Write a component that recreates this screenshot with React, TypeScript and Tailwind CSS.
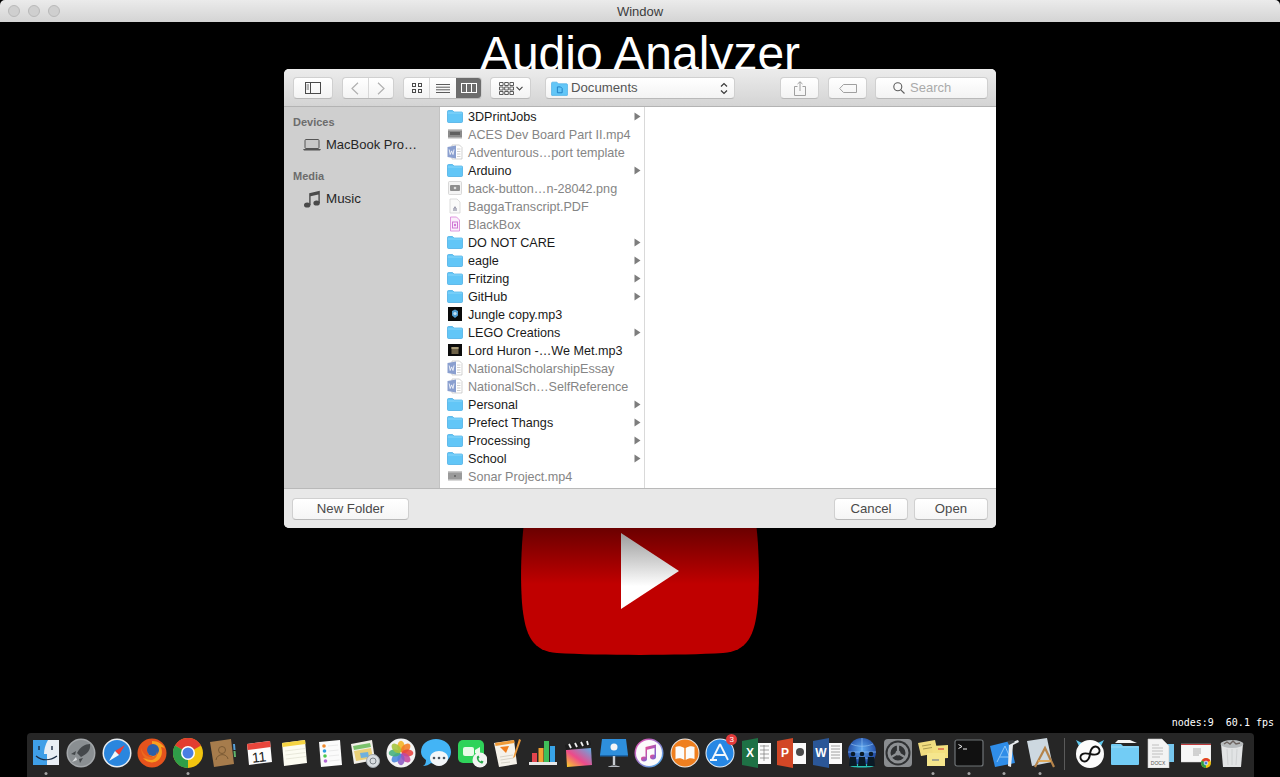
import type { ReactNode } from 'react';

type FileKind = 'folder' | 'video' | 'word' | 'png' | 'pdf' | 'pink' | 'jungle' | 'huron' | 'blank' | 'sonar';

interface FileEntry {
  name: string;
  kind: FileKind;
}

const files: FileEntry[] = [
  { name: '3DPrintJobs', kind: 'folder' },
  { name: 'ACES Dev Board Part II.mp4', kind: 'video' },
  { name: 'Adventurous…port template', kind: 'word' },
  { name: 'Arduino', kind: 'folder' },
  { name: 'back-button…n-28042.png', kind: 'png' },
  { name: 'BaggaTranscript.PDF', kind: 'pdf' },
  { name: 'BlackBox', kind: 'pink' },
  { name: 'DO NOT CARE', kind: 'folder' },
  { name: 'eagle', kind: 'folder' },
  { name: 'Fritzing', kind: 'folder' },
  { name: 'GitHub', kind: 'folder' },
  { name: 'Jungle copy.mp3', kind: 'jungle' },
  { name: 'LEGO Creations', kind: 'folder' },
  { name: 'Lord Huron -…We Met.mp3', kind: 'huron' },
  { name: 'NationalScholarshipEssay', kind: 'word' },
  { name: 'NationalSch…SelfReference', kind: 'word' },
  { name: 'Personal', kind: 'folder' },
  { name: 'Prefect Thangs', kind: 'folder' },
  { name: 'Processing', kind: 'folder' },
  { name: 'School', kind: 'folder' },
  { name: 'Sonar Project.mp4', kind: 'sonar' },
  { name: '', kind: 'blank' },
];

function FileIcon({ kind }: { kind: FileKind }) {
  if (kind === 'folder') {
    return (
      <svg width="16" height="14" viewBox="0 0 16 14" className="-translate-y-px">
        <path d="M0.5 2.500a1 1 0 0 1 1-1h4l1.500 1.500h7.500a1 1 0 0 1 1 1v8.500a1 1 0 0 1-1 1h-13a1 1 0 0 1-1-1z" fill="#62c6f7" stroke="#41a9e2" strokeWidth="0.7" />
        <path d="M0.8 4h14.400" stroke="#8ad6fa" strokeWidth="1" />
      </svg>
    );
  }
  if (kind === 'video' || kind === 'sonar') {
    return (
      <svg width="16" height="14" viewBox="0 0 16 14" className="-translate-y-px">
        <rect x="1" y="2" width="14" height="10" fill={kind === 'video' ? '#8a8a8a' : '#9a9a9a'} />
        <rect x="1" y="2" width="14" height="1.500" fill="#c8c8c8" />
        <rect x="1" y="10.500" width="14" height="1.500" fill="#d8d8d8" />
        {kind === 'video' ? <rect x="3" y="5" width="10" height="3" fill="#5f5f5f" /> : <rect x="7" y="6" width="2" height="2" fill="#6e6e6e" />}
      </svg>
    );
  }
  if (kind === 'word') {
    return (
      <svg width="16" height="16" viewBox="0 0 16 16" className="-translate-y-px">
        <path d="M5 1h7.500L15 3.500V15H5z" fill="#fff" stroke="#bfbfbf" strokeWidth="0.7" />
        <path d="M10 5h3.500M10 7.500h3.500M10 10h3.500M10 12.500h3.500" stroke="#c4c4c4" strokeWidth="0.8" />
        <path d="M0.5 3l8.500-1.500v13L0.5 13z" fill="#8a9fcf" />
        <path d="M2.200 5.500l1 5 1.400-3.600 1.400 3.600 1-5" fill="none" stroke="#fff" strokeWidth="0.8" />
      </svg>
    );
  }
  if (kind === 'png') {
    return (
      <svg width="16" height="16" viewBox="0 0 16 16" className="-translate-y-px">
        <rect x="1.500" y="1.500" width="13" height="13" rx="1" fill="#f4f4f4" stroke="#cfcfcf" strokeWidth="0.8" />
        <rect x="3" y="5" width="10" height="6" rx="1" fill="#8e8e8e" />
        <circle cx="8" cy="8" r="1.300" fill="#ddd" />
      </svg>
    );
  }
  if (kind === 'pdf') {
    return (
      <svg width="16" height="16" viewBox="0 0 16 16" className="-translate-y-px">
        <path d="M3 1h7l3 3v11H3z" fill="#fafafa" stroke="#cfcfcf" strokeWidth="0.7" />
        <path d="M6 10h4v3H6z" fill="#b9b9c6" />
        <circle cx="8" cy="9.500" r="1.100" fill="#9c9cad" />
      </svg>
    );
  }
  if (kind === 'pink') {
    return (
      <svg width="16" height="16" viewBox="0 0 16 16" className="-translate-y-px">
        <path d="M3.500 1h6l3 3v11h-9z" fill="#fbeefb" stroke="#dc8fdc" strokeWidth="0.9" />
        <rect x="5.500" y="6" width="5" height="6" fill="none" stroke="#cf78d4" strokeWidth="1" />
        <circle cx="8" cy="9" r="1.200" fill="#cf78d4" />
      </svg>
    );
  }
  if (kind === 'jungle') {
    return (
      <svg width="16" height="16" viewBox="0 0 16 16" className="-translate-y-px">
        <rect x="1" y="1" width="14" height="14" fill="#0a0a0a" />
        <path d="M8 3.500l3 1.500v4.500l-3 2.500-3-2.500V5z" fill="#4f9bd0" />
        <circle cx="8" cy="7.500" r="1.600" fill="#c4e2f4" />
      </svg>
    );
  }
  if (kind === 'huron') {
    return (
      <svg width="16" height="16" viewBox="0 0 16 16" className="-translate-y-px">
        <rect x="1" y="2" width="14" height="12" fill="#0c0c0c" />
        <rect x="4.500" y="5" width="7" height="7" fill="#6e6248" />
        <rect x="4.500" y="5" width="7" height="2" fill="#a89c78" />
      </svg>
    );
  }
  return (
    <svg width="16" height="16" viewBox="0 0 16 16">
      <rect x="2" y="1" width="12" height="14" fill="#e6e6e6" />
    </svg>
  );
}

function FileRow({ name, kind }: FileEntry) {
  const isFolder = kind === 'folder';
  const isDark = isFolder || kind === 'jungle' || kind === 'huron';
  return (
    <div className="flex h-[18px] shrink-0 items-center pl-[7px] pr-[3px]">
      <span className="flex w-[16px] justify-center">
        <FileIcon kind={kind} />
      </span>
      <span className={`ml-[5px] flex-1 whitespace-nowrap text-[12.6px] ${isDark ? 'text-[#1a1a1a]' : 'text-[#858585]'}`}>{name}</span>
      {isFolder && (
        <svg width="7" height="9" viewBox="0 0 7 9" className="-translate-y-px">
          <path d="M0.5 0.5L6.500 4.500L0.5 8.500z" fill="#7d7d7d" />
        </svg>
      )}
    </div>
  );
}

function ToolButton({ className, children }: { className: string; children?: ReactNode }) {
  return (
    <div className={`flex h-[22px] items-center justify-center rounded-[4px] border border-[#d0d0d0] border-b-[#b9b9b9] bg-gradient-to-b from-[#ffffff] to-[#f3f3f3] ${className}`}>
      {children}
    </div>
  );
}

function Toolbar() {
  return (
    <div className="flex h-[38px] shrink-0 items-start border-b border-[#b3b3b3] bg-gradient-to-b from-[#ececec] to-[#d4d4d4] pl-[9px] pr-[8px] pt-[8px]">
      <ToolButton className="w-[40px]">
        <svg width="16" height="12" viewBox="0 0 16 12" fill="none" stroke="#4a4a4a">
          <rect x="0.5" y="0.5" width="15" height="11" />
          <path d="M5.500 0.5v11" />
          <path d="M1.500 3h2.500M1.500 5h2.500M1.500 7h2.500" strokeWidth="0.8" />
        </svg>
      </ToolButton>
      <div className="ml-[9px] flex h-[22px] w-[52px] rounded-[4px] border border-[#d0d0d0] border-b-[#b9b9b9] bg-gradient-to-b from-[#ffffff] to-[#f3f3f3]">
        <div className="flex flex-1 items-center justify-center border-r border-[#d8d8d8]">
          <svg width="8" height="13" viewBox="0 0 8 13" fill="none" stroke="#b0b0b0" strokeWidth="1.200">
            <path d="M7 0.7L1 6.500L7 12.300" />
          </svg>
        </div>
        <div className="flex flex-1 items-center justify-center">
          <svg width="8" height="13" viewBox="0 0 8 13" fill="none" stroke="#b0b0b0" strokeWidth="1.200">
            <path d="M1 0.7L7 6.500L1 12.300" />
          </svg>
        </div>
      </div>
      <div className="ml-[9px] flex h-[22px] w-[79px] overflow-hidden rounded-[4px] border border-[#d0d0d0] border-b-[#b9b9b9] bg-gradient-to-b from-[#ffffff] to-[#f3f3f3]">
        <div className="flex w-[26px] items-center justify-center border-r border-[#d8d8d8]">
          <svg width="10" height="10" viewBox="0 0 10 10" fill="none" stroke="#4a4a4a">
            <rect x="0.5" y="0.5" width="3" height="3" />
            <rect x="6.500" y="0.5" width="3" height="3" />
            <rect x="0.5" y="6.500" width="3" height="3" />
            <rect x="6.500" y="6.500" width="3" height="3" />
          </svg>
        </div>
        <div className="flex w-[26px] items-center justify-center">
          <svg width="14" height="9" viewBox="0 0 14 9" stroke="#4a4a4a" strokeWidth="0.9">
            <path d="M0 0.5h14M0 3.200h14M0 5.800h14M0 8.500h14" />
          </svg>
        </div>
        <div className="flex flex-1 items-center justify-center bg-[#6c6c6c]">
          <svg width="16" height="10" viewBox="0 0 16 10" fill="none" stroke="#ffffff">
            <rect x="0.5" y="0.5" width="15" height="9" />
            <path d="M5.500 0.5v9M10.500 0.5v9" />
          </svg>
        </div>
      </div>
      <ToolButton className="ml-[8px] w-[41px] gap-[2px]">
        <svg width="15" height="13" viewBox="0 0 15 13" fill="none" stroke="#4a4a4a" strokeWidth="0.9">
          <path d="M0.5 0.5h3.600v3h-3.600zM5.700 0.5h3.600v3h-3.600zM10.900 0.5h3.600v3h-3.600zM0.5 5h3.600v3h-3.600zM5.700 5h3.600v3h-3.600zM10.900 5h3.600v3h-3.600zM0.5 9.500h3.600v3h-3.600zM5.700 9.500h3.600v3h-3.600zM10.900 9.500h3.600v3h-3.600z" />
        </svg>
        <svg width="7" height="5" viewBox="0 0 7 5" fill="none" stroke="#4a4a4a" strokeWidth="1.200">
          <path d="M0.5 0.8L3.500 3.800L6.500 0.8" />
        </svg>
      </ToolButton>
      <ToolButton className="ml-[14px] w-[190px] justify-start pl-[5px] pr-[6px]">
        <svg width="17" height="15" viewBox="0 0 16 14">
          <path d="M0.5 2a1 1 0 0 1 1-1h4l1.500 1.500h7.500a1 1 0 0 1 1 1V13a0.5 0.5 0 0 1-0.5 0.5H1a0.5 0.5 0 0 1-0.5-0.5z" fill="#62c6f7" stroke="#41a9e2" strokeWidth="0.6" />
          <path d="M6 5.500h3l1.500 1.500v4H6z" fill="none" stroke="#1f7fc4" strokeWidth="0.9" />
        </svg>
        <span className="ml-[3px] flex-1 text-[13.2px] text-[#555555]">Documents</span>
        <svg width="8" height="13" viewBox="0 0 8 13" fill="none" stroke="#3a3a3a" strokeWidth="1.200">
          <path d="M1 4.500L4 1.500L7 4.500M1 8.500L4 11.500L7 8.500" />
        </svg>
      </ToolButton>
      <ToolButton className="ml-[45px] w-[39px]">
        <svg width="12" height="15" viewBox="0 0 12 15" fill="none" stroke="#a0a0a0">
          <path d="M3.500 5.500H0.5v9h11v-9H8.500" />
          <path d="M6 10V0.8M3.500 3L6 0.8L8.500 3" />
        </svg>
      </ToolButton>
      <ToolButton className="ml-[9px] w-[39px]">
        <svg width="18" height="9" viewBox="0 0 18 9" fill="none" stroke="#a0a0a0">
          <path d="M4.500 0.5h13v8h-13L0.7 4.500z" />
        </svg>
      </ToolButton>
      <ToolButton className="ml-[8px] w-[113px] justify-start pl-[17px]">
        <svg width="12" height="12" viewBox="0 0 12 12" fill="none" stroke="#5d5d5d" strokeWidth="1.100">
          <circle cx="4.800" cy="4.800" r="4" />
          <path d="M7.800 7.800L11.500 11.500" />
        </svg>
        <span className="ml-[5px] text-[13px] text-[#aaaaaa]">Search</span>
      </ToolButton>
    </div>
  );
}

function Sidebar() {
  return (
    <div className="flex w-[156px] shrink-0 flex-col border-r border-[#c3c3c3] bg-[#cfcfcf] pl-[9px] pt-[8px]">
      <div className="text-[11px] font-bold leading-[14px] text-[#6c6c6c]">Devices</div>
      <div className="mt-[6px] flex h-[20px] items-center pl-[10px]">
        <svg width="18" height="12" viewBox="0 0 18 12">
          <rect x="2" y="0.5" width="14" height="9" rx="1" fill="#c8c8c8" stroke="#555555" />
          <path d="M0 10h18l-1 1.500H1z" fill="#555555" />
        </svg>
        <span className="ml-[5px] text-[13px] text-[#262626]">MacBook Pro…</span>
      </div>
      <div className="mt-[14px] text-[11px] font-bold leading-[14px] text-[#6c6c6c]">Media</div>
      <div className="mt-[6px] flex h-[20px] items-center pl-[11px]">
        <svg width="16" height="18" viewBox="0 0 16 18" fill="#4a4a4a">
          <ellipse cx="3.200" cy="15" rx="3.200" ry="2.600" />
          <ellipse cx="12.600" cy="13" rx="3.200" ry="2.600" />
          <path d="M5.200 15V3.200L15.800 0.8V13h-1.400V4.500L6.600 6.200V15z" />
        </svg>
        <span className="ml-[6px] text-[13.4px] text-[#262626]">Music</span>
      </div>
    </div>
  );
}

function OpenDialog() {
  return (
    <div className="absolute left-[284px] top-[47px] flex h-[459px] w-[712px] flex-col overflow-hidden rounded-[5px] bg-[#e8e8e8]">
      <Toolbar />
      <div className="flex h-[381px] shrink-0 overflow-hidden">
        <Sidebar />
        <div className="flex w-[205px] shrink-0 flex-col overflow-hidden border-r border-[#d9d9d9] bg-white pt-px">
          {files.map((file, i) => (
            <FileRow key={i} {...file} />
          ))}
        </div>
        <div className="flex-1 bg-white" />
      </div>
      <div className="flex flex-1 items-center justify-between border-t border-[#b9b9b9] bg-[#e8e8e8] px-[8px]">
        <FooterButton className="w-[117px]">New Folder</FooterButton>
        <div className="flex gap-[6px]">
          <FooterButton className="w-[74px]">Cancel</FooterButton>
          <FooterButton className="w-[74px]">Open</FooterButton>
        </div>
      </div>
    </div>
  );
}

function FooterButton({ className, children }: { className: string; children: ReactNode }) {
  return (
    <div className={`flex h-[22px] items-center justify-center rounded-[4px] border border-[#d0d0d0] border-b-[#b9b9b9] bg-gradient-to-b from-[#ffffff] to-[#f5f5f5] text-[13.2px] text-[#4a4a4a] ${className}`}>
      {children}
    </div>
  );
}

function PlayLogo() {
  return (
    <svg width="238" height="168" viewBox="0 0 238 168" className="mx-auto block">
      <defs>
        <linearGradient id="ytBody" x1="0" y1="0" x2="0" y2="1">
          <stop offset="0" stopColor="#200000" />
          <stop offset="0.24" stopColor="#6a0000" />
          <stop offset="0.58" stopColor="#c00000" />
          <stop offset="1" stopColor="#c00000" />
        </linearGradient>
        <linearGradient id="ytPlay" x1="0" y1="0" x2="0" y2="1">
          <stop offset="0" stopColor="#9c9c9c" />
          <stop offset="0.7" stopColor="#ffffff" />
          <stop offset="1" stopColor="#ffffff" />
        </linearGradient>
      </defs>
      <path
        d="M36 0H202C228 0 234 12 237 58C238.500 84 238 100 237 116C234 150 226 164 202 166C160 168.500 78 168.500 36 166C12 164 4 150 1 116C0 100 -0.500 84 1 58C4 12 10 0 36 0Z"
        fill="url(#ytBody)"
      />
      <path d="M100 46L158 84L100 122Z" fill="url(#ytPlay)" />
    </svg>
  );
}

/* dock icons, all drawn on a 30x30 box */
function Finder() {
  return (
    <svg viewBox="0 0 30 30" className="size-[30px]">
      <rect x="2" y="2" width="26" height="25" fill="#e9eff5" />
      <path d="M2 2h15c-3 5-4 10-4 14h3v11H2z" fill="#3f9fe8" />
      <path d="M8 8v4M21 8v4" stroke="#1b2d44" strokeWidth="1.400" />
      <path d="M5 18c6 5 14 5 21 0" fill="none" stroke="#1b2d44" strokeWidth="1.200" />
    </svg>
  );
}
function Launchpad() {
  return (
    <svg viewBox="0 0 30 30" className="size-[30px]">
      <circle cx="15" cy="15" r="14.500" fill="#a4a8ab" />
      <circle cx="15" cy="15" r="13" fill="#8a8f92" />
      <path d="M24 6c-5 0-10 3-13 9l4 4c6-3 10-7 9-13z" fill="#44484b" />
      <path d="M10 13l-5 3 4 1zM17 20l-3 5-1-4z" fill="#44484b" />
      <path d="M10 19l-4 5 5-2z" fill="#d9dcde" />
    </svg>
  );
}
function Safari() {
  return (
    <svg viewBox="0 0 30 30" className="size-[30px]">
      <circle cx="15" cy="15" r="14.500" fill="#e8edf1" />
      <circle cx="15" cy="15" r="13" fill="#2a86de" />
      <path d="M23 7L13 13L17 17Z" fill="#ef3d35" />
      <path d="M7 23L13 13L17 17Z" fill="#f3f6f8" />
    </svg>
  );
}
function Firefox() {
  return (
    <svg viewBox="0 0 30 30" className="size-[30px]">
      <circle cx="15" cy="15" r="14.500" fill="#e5531d" />
      <path d="M15 3c6 0 11 3 14 9-1-2-3-3-5-3 2 5 1 11-4 14-5 3-11 1-14-3 3 1 8 1 10-2-3 0-6-2-5-6 1-2 3-3 5-3-1-2-1-4-1-6z" fill="#f8a01f" />
      <circle cx="16" cy="12" r="6" fill="#2d5fa8" />
      <path d="M4 10c2 6 6 9 10 9 4 0 6-3 6-6 1 4-1 8-5 9-6 1-11-5-11-12z" fill="#ec6a1f" />
    </svg>
  );
}
function Chrome() {
  return (
    <svg viewBox="0 0 30 30" className="size-[30px]">
      <circle cx="15" cy="15" r="15" fill="#f1c40f" />
      <path d="M15 15L2 7.500A15 15 0 0 1 28 7.500Z" fill="#e23d30" />
      <path d="M15 15L2 7.500A15 15 0 0 0 15 30Z" fill="#2f9e48" />
      <circle cx="15" cy="15" r="7" fill="#ffffff" />
      <circle cx="15" cy="15" r="5.500" fill="#4a7fe3" />
    </svg>
  );
}
function Contacts() {
  return (
    <svg viewBox="0 0 30 30" className="size-[30px]">
      <path d="M2 4l21-3 3 25-20 3z" fill="#a67c4c" />
      <path d="M25 6l2 0 0.500 6-2 0z" fill="#56a0d8" />
      <path d="M25.500 13l2 0 0.500 6-2 0z" fill="#5fb56a" />
      <circle cx="14" cy="12" r="3.500" fill="none" stroke="#7a5a34" />
      <path d="M8 22c1-7 11-7 12-1" fill="none" stroke="#7a5a34" />
    </svg>
  );
}
function Calendar() {
  return (
    <svg viewBox="0 0 30 30" className="size-[30px]">
      <path d="M3 6l23-3 2 21-23 3z" fill="#fdfdfd" />
      <path d="M3 6l23-3 0.700 6-23 3z" fill="#e8463c" />
      <text x="15" y="24" textAnchor="middle" fontSize="14" fontFamily="'Liberation Sans',sans-serif" fill="#222" transform="rotate(-6 15 18)">11</text>
    </svg>
  );
}
function Notes() {
  return (
    <svg viewBox="0 0 30 30" className="size-[30px]">
      <path d="M3 5l23-3 2 23-23 3z" fill="#fcfcf2" />
      <path d="M3 5l23-3 0.500 4-23 3z" fill="#f5d443" />
      <path d="M6 13l20-2.500M6.500 17l20-2.500M7 21l20-2.500" stroke="#e0dfd0" strokeWidth="0.7" />
    </svg>
  );
}
function Reminders() {
  return (
    <svg viewBox="0 0 30 30" className="size-[30px]">
      <path d="M4 4l21-2 2 25-21 2z" fill="#fbfbfb" />
      <circle cx="9" cy="8" r="1.800" fill="#f08a2c" />
      <circle cx="9.500" cy="13" r="1.800" fill="#2f9fe0" />
      <circle cx="10" cy="18" r="1.800" fill="#4cc94f" />
      <circle cx="10.500" cy="23" r="1.800" fill="#b56ad6" />
      <path d="M13 8l10-1M13.500 13l10-1M14 18l10-1M14.500 23l10-1" stroke="#dfdfdf" strokeWidth="0.6" />
    </svg>
  );
}
function Preview() {
  return (
    <svg viewBox="0 0 30 30" className="size-[30px]">
      <path d="M1 6l21-4 3 20-21 4z" fill="#f1efe8" />
      <path d="M3 8l17-3 1 4-17 3z" fill="#7bc26c" />
      <path d="M4 13l17-3 2 10-17 3z" fill="#e9cf77" />
      <path d="M10 15l8-1 1 5-8 1z" fill="#6fb0de" />
      <circle cx="23" cy="23" r="6.500" fill="#d8dde1" stroke="#9ea5ab" />
      <circle cx="23" cy="23" r="3" fill="none" stroke="#7a8187" />
    </svg>
  );
}
function Photos() {
  const colors = ['#f4b21f', '#f37b22', '#e8423f', '#c5459b', '#8b5bc4', '#4a87dd', '#44b07b', '#a4c43b'];
  return (
    <svg viewBox="0 0 30 30" className="size-[30px]">
      <circle cx="15" cy="15" r="14.500" fill="#f3f3f3" />
      {colors.map((color, i) => (
        <ellipse key={color} cx="15" cy="8.500" rx="3.600" ry="5.800" fill={color} fillOpacity="0.88" transform={`rotate(${i * 45} 15 15)`} />
      ))}
    </svg>
  );
}
function Messages() {
  return (
    <svg viewBox="0 0 30 30" className="size-[30px]">
      <path d="M30 14c0 7-6 12-14 12-2 0-4 0-6-1-2 2-5 3-8 3 2-1 3-3 3-6-3-2-5-5-5-8C0 6 7 1 15 1s15 5 15 13z" fill="#43b4f6" />
      <path d="M27 20c0 4-4 8-9 8s-9-4-9-8 4-7 9-7 9 3 9 7z" fill="#f2f6f9" />
      <circle cx="13" cy="20" r="1.300" fill="#4a5661" />
      <circle cx="18" cy="20" r="1.300" fill="#4a5661" />
      <circle cx="23" cy="20" r="1.300" fill="#4a5661" />
    </svg>
  );
}
function FaceTime() {
  return (
    <svg viewBox="0 0 30 30" className="size-[30px]">
      <rect x="1" y="2" width="26" height="23" rx="5" fill="#2fd35a" />
      <rect x="6" y="9" width="11" height="9" rx="2" fill="#e9fbe9" />
      <path d="M18 12l5-3v9l-5-3z" fill="#e9fbe9" />
      <circle cx="23" cy="22" r="7.500" fill="#f2f4f2" />
      <path d="M20 18.500c-1 3 2 7 5.500 7l1-2-2-1-1 1c-1-0.500-2-2-2-3l1-1-1-2z" fill="#27a84a" />
    </svg>
  );
}
function Pages() {
  return (
    <svg viewBox="0 0 30 30" className="size-[30px]">
      <path d="M2 5l20-3 3 24-18 3z" fill="#f5f2ea" />
      <path d="M3 5l19-3 0.500 3-19 3z" fill="#ef9a37" />
      <path d="M8 9l9-1-3 7z" fill="#f07d1d" />
      <path d="M8 19l13-2M8.500 22l13-2M9 25l9-1" stroke="#c9c4b8" strokeWidth="0.7" />
      <path d="M27 1l2 1-6 17-2 1z" fill="#ec9a3a" />
    </svg>
  );
}
function Numbers() {
  return (
    <svg viewBox="0 0 30 30" className="size-[30px]">
      <rect x="1" y="24" width="28" height="3" fill="#e7e7e7" />
      <rect x="4" y="15" width="5" height="9" fill="#e2454e" />
      <rect x="10.500" y="10" width="5" height="14" fill="#f3a132" />
      <rect x="16" y="3" width="5" height="21" fill="#3fbe59" />
      <rect x="22" y="8" width="5" height="16" fill="#38a3e6" />
    </svg>
  );
}
function FinalCut() {
  return (
    <svg viewBox="0 0 30 30" className="size-[30px]">
      <defs>
        <linearGradient id="fcpFill" x1="0" y1="1" x2="1" y2="0">
          <stop offset="0" stopColor="#f9d423" />
          <stop offset="0.45" stopColor="#ed4a8b" />
          <stop offset="1" stopColor="#58b2e8" />
        </linearGradient>
      </defs>
      <path d="M3 12l25-2 1 17-25 2z" fill="url(#fcpFill)" />
      <path d="M2 7l25-5 1 5-25 5z" fill="#1d1d1d" />
      <path d="M6 6l2 4M12 5l2 4M18 4l2 4M24 3l1 4" stroke="#f1f1f1" strokeWidth="1.800" />
    </svg>
  );
}
function Keynote() {
  return (
    <svg viewBox="0 0 30 30" className="size-[30px]">
      <path d="M3 1h24l2 16H1z" fill="#2e8fdc" />
      <path d="M1 17h28v1.500H1z" fill="#1a66ab" />
      <circle cx="15" cy="9" r="3.500" fill="#f6f6f6" />
      <rect x="13.800" y="18" width="2.400" height="9" fill="#c9ced3" />
      <path d="M9 29c1-2 11-2 12 0z" fill="#b8bdc3" />
    </svg>
  );
}
function Itunes() {
  return (
    <svg viewBox="0 0 30 30" className="size-[30px]">
      <defs>
        <linearGradient id="itRing" x1="0" y1="0" x2="1" y2="1">
          <stop offset="0" stopColor="#f24bb0" />
          <stop offset="1" stopColor="#3eb4f0" />
        </linearGradient>
        <linearGradient id="itNote" x1="0" y1="0" x2="1" y2="1">
          <stop offset="0" stopColor="#ee4a8e" />
          <stop offset="1" stopColor="#6a6ae0" />
        </linearGradient>
      </defs>
      <circle cx="15" cy="15" r="14.500" fill="url(#itRing)" />
      <circle cx="15" cy="15" r="13" fill="#fbfbfb" />
      <g fill="url(#itNote)">
        <ellipse cx="10" cy="21" rx="3" ry="2.400" />
        <ellipse cx="19" cy="19" rx="3" ry="2.400" />
        <path d="M11.500 21V9L22 6.500V19h-1.500V10l-7.500 1.700V21z" />
      </g>
    </svg>
  );
}
function Ibooks() {
  return (
    <svg viewBox="0 0 30 30" className="size-[30px]">
      <circle cx="15" cy="15" r="14.500" fill="#e8e8e8" />
      <circle cx="15" cy="15" r="13.500" fill="#ef7f1f" />
      <path d="M14.300 10C11 8 8 8 5.500 9v12c3-1 6-1 8.800 1zM15.700 10c3.300-2 6.300-2 8.800-1v12c-3-1-6-1-8.800 1z" fill="#fbfbfb" />
    </svg>
  );
}
function AppStore() {
  return (
    <svg viewBox="0 0 30 30" className="size-[30px]">
      <circle cx="15" cy="15" r="14.500" fill="#e6edf3" />
      <circle cx="15" cy="15" r="13.500" fill="#2687e4" />
      <path d="M15 6L7 22M15 6l8 16M9 17h12M5 22h7" fill="none" stroke="#f4f8fb" strokeWidth="1.800" />
    </svg>
  );
}
function OfficeApp({ fill, letter, right }: { fill: string; letter: string; right: ReactNode }) {
  return (
    <svg viewBox="0 0 30 30" className="size-[30px]">
      <rect x="12" y="5" width="18" height="21" fill="#fafafa" />
      {right}
      <path d="M1 3l16-3v30L1 27z" fill={fill} />
      <text x="9" y="19" textAnchor="middle" fontSize="12" fontWeight="700" fontFamily="'Liberation Sans',sans-serif" fill="#ffffff">{letter}</text>
    </svg>
  );
}
function Circles() {
  const people = [6, 15, 24];
  return (
    <svg viewBox="0 0 30 30" className="size-[30px]">
      <defs>
        <radialGradient id="netGlobe" cx="0.5" cy="0.4" r="0.6">
          <stop offset="0" stopColor="#5da9f2" />
          <stop offset="1" stopColor="#1a3f9b" />
        </radialGradient>
      </defs>
      <circle cx="15" cy="14" r="14" fill="url(#netGlobe)" />
      <path d="M1 14h28M15 0v28M4 6c7 3 15 3 22 0M4 22c7-3 15-3 22 0" stroke="#9ccbf6" strokeWidth="0.6" fill="none" />
      <path d="M3 28c2 2 22 2 24 0l-2-2H5z" fill="#27c2b5" />
      {people.map(x => (
        <g key={x} fill="#0a1a26">
          <circle cx={x} cy="16" r="2.300" />
          <path d={`M${x - 3} 19h6l1 9h-8z`} />
        </g>
      ))}
    </svg>
  );
}
function SystemPrefs() {
  return (
    <svg viewBox="0 0 30 30" className="size-[30px]">
      <rect x="1" y="1" width="28" height="28" rx="4" fill="#8a8d90" />
      <circle cx="15" cy="15" r="12.500" fill="#2f3133" />
      <circle cx="15" cy="15" r="9" fill="none" stroke="#8d9093" strokeWidth="3" />
      <path d="M15 15V6.500M15 15l-7.500 4.500M15 15l7.500 4.500" stroke="#8d9093" strokeWidth="2.200" />
      <circle cx="15" cy="15" r="2.500" fill="#8d9093" />
    </svg>
  );
}
function Stickies() {
  return (
    <svg viewBox="0 0 30 30" className="size-[30px]">
      <path d="M0 5l17-3 3 13-17 3z" fill="#f0dc7f" />
      <path d="M14 8l16-1 1 13-16 1z" fill="#f3e07f" />
      <path d="M9 15l18 0 0 13-18 0z" fill="#f5e68d" />
      <path d="M4 8l9-1.500M5 11l9-1.500" stroke="#8a7c3a" strokeWidth="0.7" />
      <path d="M20 11h6" stroke="#d8453c" strokeWidth="1.200" />
      <path d="M14 22h7" stroke="#5a6a8a" strokeWidth="1" />
    </svg>
  );
}
function Terminal() {
  return (
    <svg viewBox="0 0 30 30" className="size-[30px]">
      <rect x="1" y="2" width="28" height="26" rx="2" fill="#111111" stroke="#6f7477" strokeWidth="1.200" />
      <path d="M4.500 6.500L8 8.500L4.500 10.500" fill="none" stroke="#f1f1f1" strokeWidth="1" />
      <path d="M9 11h4" stroke="#f1f1f1" strokeWidth="1" />
    </svg>
  );
}
function Xcode() {
  return (
    <svg viewBox="0 0 30 30" className="size-[30px]">
      <path d="M1 8l20-5 5 22-20 4z" fill="#2f8de8" />
      <path d="M8 24l8-16 6 14M11 19h9" fill="none" stroke="#8fc7f6" strokeWidth="1" />
      <path d="M20 5l9-3 1 2-6 3-2 22-3-1z" fill="#e9ecef" />
      <path d="M18 3l6-1 2 2-6 3z" fill="#3c4044" />
    </svg>
  );
}
function Instruments() {
  return (
    <svg viewBox="0 0 30 30" className="size-[30px]">
      <path d="M2 3l20-3 5 24-20 4z" fill="#cdd8e0" />
      <path d="M10 29L20 10l9 19" fill="none" stroke="#b4834a" strokeWidth="2.200" />
      <path d="M13 23h13" stroke="#e0a650" strokeWidth="1.800" />
    </svg>
  );
}
function InfinityApp() {
  return (
    <svg viewBox="0 0 30 30" className="size-[30px]">
      <path d="M1 2l6 3h16l6-3-3 6H4z" fill="#5fc8ee" />
      <circle cx="15" cy="16" r="14" fill="#fbfbfb" />
      <g transform="rotate(-32 15 16)">
        <path d="M15 16c-3-3-4.500-4-6.500-4a4 4 0 0 0 0 8c2.500 0 4.500-1.500 6.500-4s4-4 6.500-4a4 4 0 0 1 0 8c-2 0-3.500-1-6.500-4z" fill="none" stroke="#111111" strokeWidth="2" />
      </g>
    </svg>
  );
}
function FolderStack() {
  return (
    <svg viewBox="0 0 30 30" className="size-[30px]">
      <path d="M8 2h12l7 3H5z" fill="#f5f5f5" />
      <path d="M1 7a1 1 0 0 1 1-1h9l2 2h15a1 1 0 0 1 1 1v17a1 1 0 0 1-1 1H2a1 1 0 0 1-1-1z" fill="#72ccf5" />
      <path d="M1 9h28" stroke="#9adcf8" strokeWidth="1" />
    </svg>
  );
}
function DocStack() {
  return (
    <svg viewBox="0 0 30 30" className="size-[30px]">
      <path d="M14 6h14v18H14z" fill="#76c7ee" />
      <path d="M2 1h14l7 7v22H2z" fill="#f3f3f3" stroke="#c7c7c7" strokeWidth="0.6" />
      <path d="M6 7h7M6 10h11M6 13h11M6 16h11M6 19h8" stroke="#a9a9a9" strokeWidth="0.7" />
      <text x="12" y="27" textAnchor="middle" fontSize="5" fontFamily="'Liberation Sans',sans-serif" fill="#555">DOCX</text>
    </svg>
  );
}
function WindowStack() {
  return (
    <svg viewBox="0 0 30 30" className="size-[30px]">
      <rect x="0" y="6" width="30" height="18" fill="#f7f7f7" stroke="#d6d6d6" strokeWidth="0.5" />
      <rect x="0" y="6" width="30" height="1" fill="#c0393b" />
      <path d="M12 11h8M12 13h8M12 15h8M12 17h6" stroke="#9a9a9a" strokeWidth="0.8" />
      <circle cx="25" cy="25" r="5" fill="#f1c40f" />
      <path d="M25 25l-4.300-2.500a5 5 0 0 1 8.600 0z" fill="#e23d30" />
      <path d="M25 25l-4.300-2.500a5 5 0 0 0 4.300 7.500z" fill="#2f9e48" />
      <circle cx="25" cy="25" r="1.900" fill="#4a7fe3" stroke="#fff" strokeWidth="0.7" />
    </svg>
  );
}
function Trash() {
  return (
    <svg viewBox="0 0 30 30" className="size-[30px]">
      <path d="M4 6h22l-2 23H6z" fill="#e2e4e5" />
      <ellipse cx="15" cy="6" rx="11.500" ry="4" fill="#b7bbbd" />
      <path d="M7 6l3-2 3 2 3-3 3 3 4-1" fill="none" stroke="#6d6460" strokeWidth="1.400" />
      <path d="M10 11l1 16M15 11v16M20 11l-1 16" stroke="#c9cccd" strokeWidth="0.8" />
    </svg>
  );
}

const excelRight = <path d="M19 8h9M19 12h9M19 16h9M19 20h9M23 7v16" stroke="#7a7a7a" strokeWidth="0.7" />;
const pptRight = <circle cx="24" cy="14" r="4" fill="#4a4a4a" />;
const wordRight = <path d="M19 8h9M19 11h9M19 14h9M19 17h9M19 20h9" stroke="#8a8a8a" strokeWidth="0.8" />;

const dockIcons: { id: string; node: ReactNode; running?: boolean }[] = [
  { id: 'finder', node: <Finder />, running: true },
  { id: 'launchpad', node: <Launchpad /> },
  { id: 'safari', node: <Safari /> },
  { id: 'firefox', node: <Firefox /> },
  { id: 'chrome', node: <Chrome />, running: true },
  { id: 'contacts', node: <Contacts /> },
  { id: 'calendar', node: <Calendar /> },
  { id: 'notes', node: <Notes /> },
  { id: 'reminders', node: <Reminders /> },
  { id: 'preview', node: <Preview /> },
  { id: 'photos', node: <Photos /> },
  { id: 'messages', node: <Messages /> },
  { id: 'facetime', node: <FaceTime /> },
  { id: 'pages', node: <Pages /> },
  { id: 'numbers', node: <Numbers /> },
  { id: 'finalcut', node: <FinalCut /> },
  { id: 'keynote', node: <Keynote /> },
  { id: 'itunes', node: <Itunes /> },
  { id: 'ibooks', node: <Ibooks /> },
  {
    id: 'appstore',
    node: (
      <div className="relative">
        <AppStore />
        <span className="absolute -right-[2px] -top-[4px] flex size-[11px] items-center justify-center rounded-full bg-[#e33b3b] text-[8px] leading-none text-white">3</span>
      </div>
    ),
  },
  { id: 'excel', node: <OfficeApp fill="#1e7145" letter="X" right={excelRight} /> },
  { id: 'powerpoint', node: <OfficeApp fill="#d24726" letter="P" right={pptRight} /> },
  { id: 'word', node: <OfficeApp fill="#2b5797" letter="W" right={wordRight} /> },
  { id: 'circles', node: <Circles /> },
  { id: 'sysprefs', node: <SystemPrefs /> },
  { id: 'stickies', node: <Stickies />, running: true },
  { id: 'terminal', node: <Terminal />, running: true },
  { id: 'xcode', node: <Xcode />, running: true },
  { id: 'instruments', node: <Instruments />, running: true },
];

const dockStacks: { id: string; node: ReactNode }[] = [
  { id: 'infinity', node: <InfinityApp /> },
  { id: 'folder', node: <FolderStack /> },
  { id: 'docs', node: <DocStack /> },
  { id: 'window', node: <WindowStack /> },
  { id: 'trash', node: <Trash /> },
];

function DockItem({ node, running }: { node: ReactNode; running?: boolean }) {
  return (
    <div className="relative flex h-[44px] w-[35.5px] shrink-0 items-start justify-center pt-[5px]">
      {node}
      {running && <span className="absolute bottom-[2px] left-1/2 size-[3px] -translate-x-1/2 rounded-full bg-[#a3a3a3]" />}
    </div>
  );
}

function Dock() {
  return (
    <div className="absolute bottom-0 left-[27px] flex h-[44px] w-[1227px] rounded-t-[4px] bg-[#262626] pl-[1px]">
      {dockIcons.map(item => (
        <DockItem key={item.id} node={item.node} running={item.running} />
      ))}
      <div className="flex w-[14.500px] shrink-0 justify-center pt-[5px]">
        <div className="h-[32px] w-px bg-[#5a5a5a]" />
      </div>
      {dockStacks.map(item => (
        <DockItem key={item.id} node={item.node} />
      ))}
    </div>
  );
}

export default function App() {
  return (
    <div className="flex h-screen w-full flex-col overflow-hidden bg-black font-['Liberation_Sans',sans-serif]">
      {/* window title bar */}
      <div className="relative flex h-[22px] shrink-0 items-center justify-center rounded-t-[5px] bg-gradient-to-b from-[#ebebeb] to-[#d4d4d4]">
        <div className="absolute left-[8px] flex gap-[8px]">
          <span className="size-[12px] rounded-full border border-[#b9b9b9] bg-[#cfcfcf]" />
          <span className="size-[12px] rounded-full border border-[#b9b9b9] bg-[#cfcfcf]" />
          <span className="size-[12px] rounded-full border border-[#b9b9b9] bg-[#cfcfcf]" />
        </div>
        <span className="pt-px text-[13px] text-[#3c3c3c]">Window</span>
      </div>
      {/* app canvas */}
      <div className="relative flex-1 bg-black">
        <h1 className="mt-[4px] text-center text-[48px] font-normal leading-[56px] text-white">Audio Analyzer</h1>
        <div className="mt-[405px]">
          <PlayLogo />
        </div>
        <OpenDialog />
        <div className="absolute right-[6px] top-[694px] whitespace-pre font-['DejaVu_Sans_Mono',monospace] text-[10px] leading-[14px] text-white">nodes:9  60.1 fps</div>
        <Dock />
      </div>
    </div>
  );
}
